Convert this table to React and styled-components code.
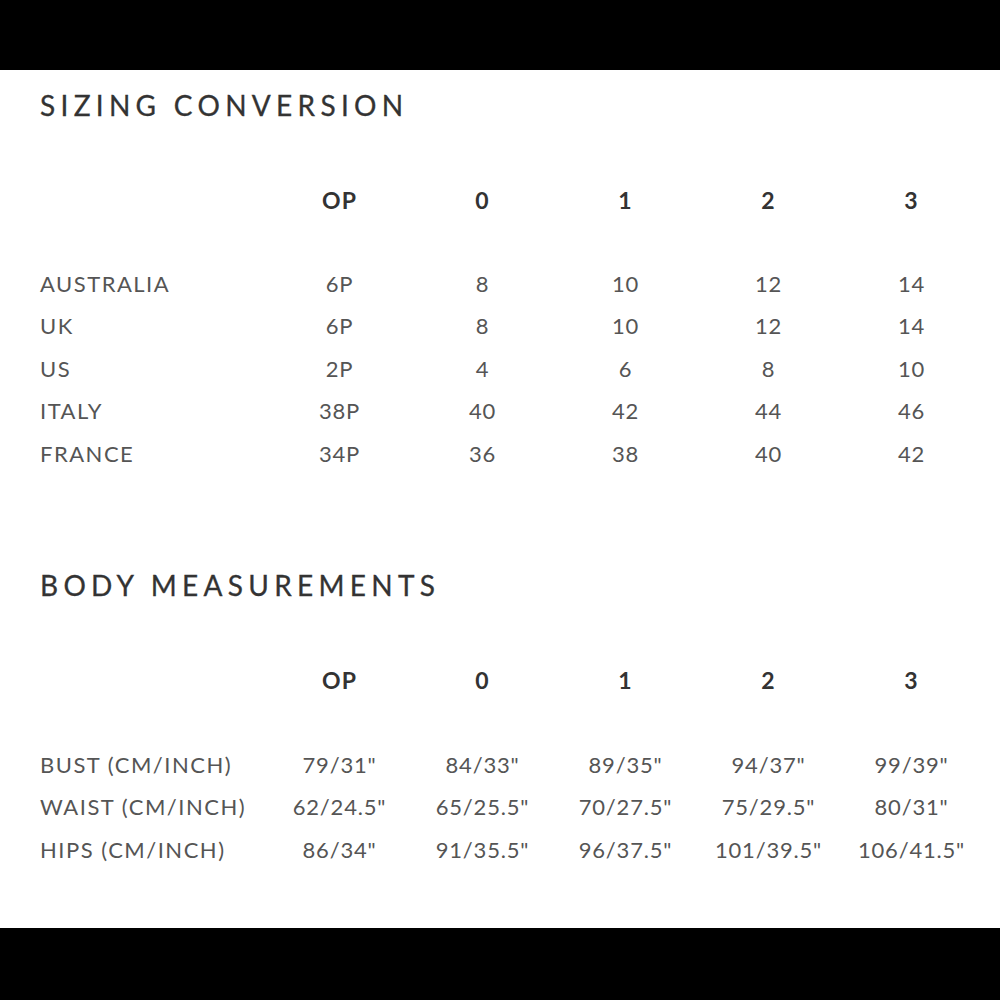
import React from "react";
import styled, { createGlobalStyle } from "styled-components";

const GlobalStyle = createGlobalStyle`
  html, body {
    margin: 0;
    padding: 0;
    background: #000;
  }
  body {
    font-family: "Lato", "Open Sans", sans-serif;
  }
`;

const Page = styled.div`
  width: 1000px;
  height: 1000px;
  display: flex;
  flex-direction: column;
  background: #000;
`;

const Bar = styled.div`
  height: ${(props) => props.h}px;
  background: #000;
  flex: none;
`;

const Sheet = styled.div`
  flex: 1;
  background: #fff;
  padding-left: 40px;
  color: #555;
`;

const SectionTitle = styled.h2`
  margin: ${(props) => props.top}px 0 0 0;
  height: 40px;
  line-height: 40px;
  font-size: 28px;
  font-weight: 400;
  letter-spacing: 5.3px;
  color: #333;
  white-space: nowrap;
  -webkit-text-stroke: 0.3px #333;
`;

const Table = styled.div`
  display: grid;
  grid-template-columns: 228px repeat(5, 143px);
`;

const HeadRow = styled(Table)`
  margin-top: 55px;
  height: 40px;
  align-items: center;
`;

const HeadCell = styled.div`
  text-align: center;
  font-size: 23px;
  font-weight: 700;
  letter-spacing: 1px;
  color: #333;
`;

const Body = styled.div`
  margin-top: ${(props) => props.top}px;
`;

const Row = styled(Table)`
  height: 42.5px;
  align-items: center;
`;

const Label = styled.div`
  font-size: 22px;
  color: #555;
  letter-spacing: 1.5px;
  white-space: nowrap;
`;

const Cell = styled.div`
  text-align: center;
  font-size: 22px;
  color: #555;
  letter-spacing: 0.8px;
  white-space: nowrap;
`;

const sizes = ["OP", "0", "1", "2", "3"];

const conversion = [
  ["AUSTRALIA", "6P", "8", "10", "12", "14"],
  ["UK", "6P", "8", "10", "12", "14"],
  ["US", "2P", "4", "6", "8", "10"],
  ["ITALY", "38P", "40", "42", "44", "46"],
  ["FRANCE", "34P", "36", "38", "40", "42"],
];

const body = [
  ["BUST (CM/INCH)", "79/31\"", "84/33\"", "89/35\"", "94/37\"", "99/39\""],
  ["WAIST (CM/INCH)", "62/24.5\"", "65/25.5\"", "70/27.5\"", "75/29.5\"", "80/31\""],
  ["HIPS (CM/INCH)", "86/34\"", "91/35.5\"", "96/37.5\"", "101/39.5\"", "106/41.5\""],
];

const SizeTable = ({ rows, top }) => (
  <>
    <HeadRow>
      <div />
      {sizes.map((s) => (
        <HeadCell key={s}>{s}</HeadCell>
      ))}
    </HeadRow>
    <Body top={top}>
      {rows.map(([label, ...vals]) => (
        <Row key={label}>
          <Label>{label}</Label>
          {vals.map((v, i) => (
            <Cell key={i}>{v}</Cell>
          ))}
        </Row>
      ))}
    </Body>
  </>
);

const App = () => {
  return (
    <>
      <GlobalStyle />
      <Page>
        <Bar h={70} />
        <Sheet>
          <SectionTitle top={15}>SIZING CONVERSION</SectionTitle>
          <SizeTable rows={conversion} top={41.75} />
          <SectionTitle top={90.75}>BODY MEASUREMENTS</SectionTitle>
          <SizeTable rows={body} top={42.75} />
        </Sheet>
        <Bar h={72} />
      </Page>
    </>
  );
};

export default App;
